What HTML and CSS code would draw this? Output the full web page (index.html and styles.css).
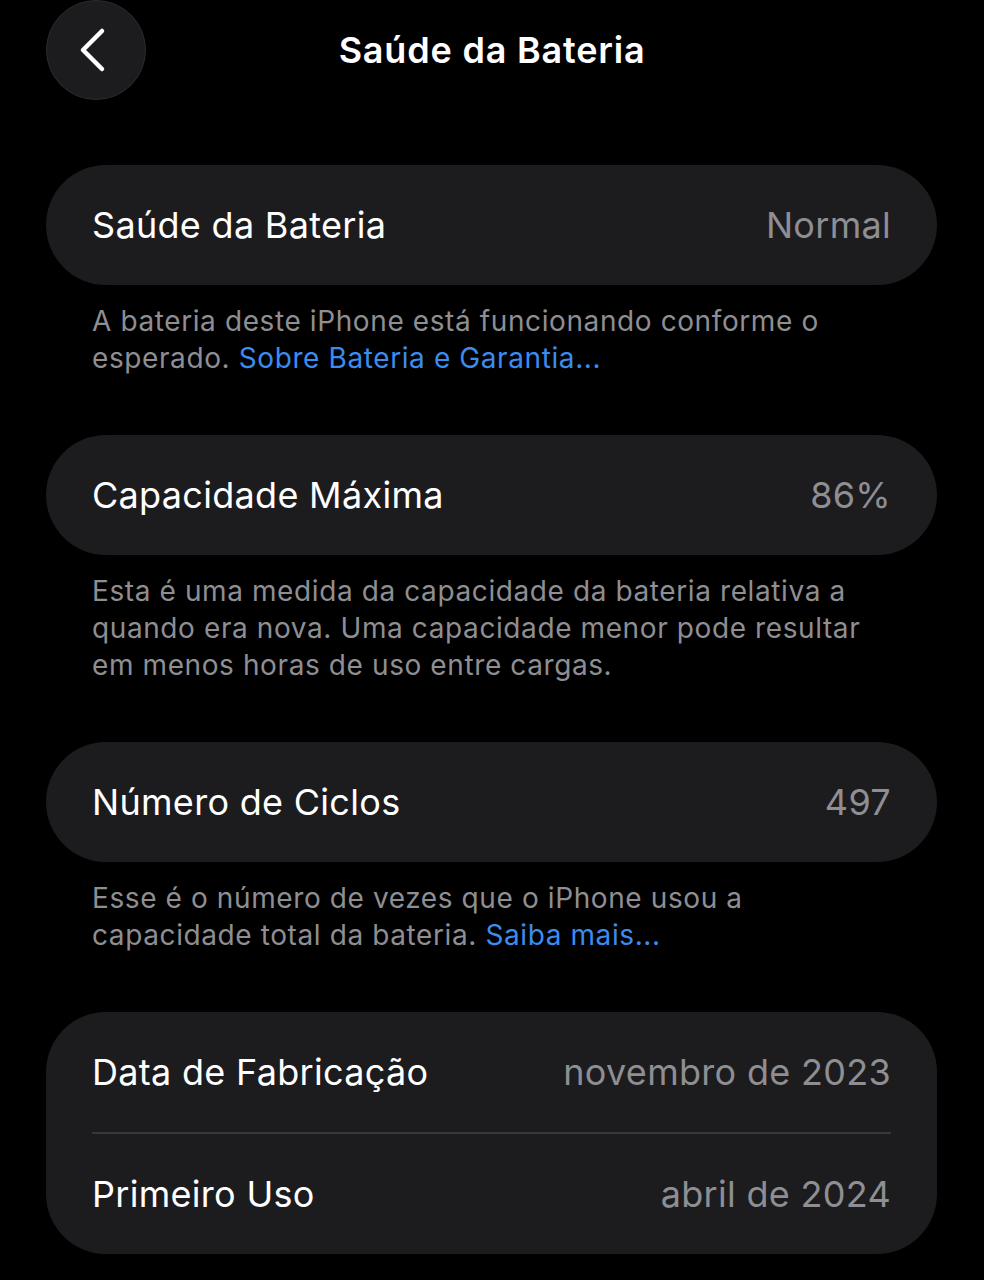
FILE: index.html
```html
<!DOCTYPE html>
<html lang="pt-BR">

<head>
  <meta charset="UTF-8">
  <meta name="viewport" content="width=device-width, initial-scale=1.0">
  <title>Saúde da Bateria</title>
  <link rel="stylesheet" href="styles.css">
</head>

<body>
  <header class="topbar">
    <button class="back-btn" aria-label="Voltar">
      <svg width="34" height="46" viewBox="0 0 34 46">
        <path d="M27 4 L8 23 L27 42" fill="none" stroke="#fff" stroke-width="4.5" stroke-linecap="round" stroke-linejoin="round" />
      </svg>
    </button>
    <h1 class="title">Saúde da Bateria</h1>
  </header>

  <main class="content">
    <section class="group">
      <div class="card">
        <div class="row">
          <span class="label">Saúde da Bateria</span>
          <span class="value">Normal</span>
        </div>
      </div>
      <p class="note">A bateria deste iPhone está funcionando conforme o esperado. <a href="#">Sobre Bateria e Garantia...</a></p>
    </section>

    <section class="group">
      <div class="card">
        <div class="row">
          <span class="label">Capacidade Máxima</span>
          <span class="value">86%</span>
        </div>
      </div>
      <p class="note">Esta é uma medida da capacidade da bateria relativa a quando era nova. Uma capacidade menor pode resultar em menos horas de uso entre cargas.</p>
    </section>

    <section class="group">
      <div class="card">
        <div class="row">
          <span class="label">Número de Ciclos</span>
          <span class="value">497</span>
        </div>
      </div>
      <p class="note">Esse é o número de vezes que o iPhone usou a capacidade total da bateria. <a href="#">Saiba mais...</a></p>
    </section>

    <section class="group">
      <div class="card">
        <div class="row">
          <span class="label">Data de Fabricação</span>
          <span class="value">novembro de 2023</span>
        </div>
        <div class="divider"></div>
        <div class="row">
          <span class="label">Primeiro Uso</span>
          <span class="value">abril de 2024</span>
        </div>
      </div>
    </section>
  </main>
</body>

</html>
```

FILE: styles.css
```css
* {
  margin: 0;
  padding: 0;
  box-sizing: border-box;
  font-family: Inter, 'Noto Sans', sans-serif;
}

body {
  background: #000;
  color: #fff;
  width: 984px;
  height: 1280px;
  overflow: hidden;
}

.topbar {
  position: relative;
  height: 100px;
  display: flex;
  align-items: center;
  justify-content: center;
}

.back-btn {
  position: absolute;
  left: 46px;
  top: 0;
  width: 100px;
  height: 100px;
  border-radius: 50%;
  background: #1c1c1e;
  border: 1.5px solid #2c2c2e;
  display: flex;
  align-items: center;
  justify-content: center;
  padding-right: 8px;
}

.title {
  font-size: 36px;
  font-weight: 600;
  letter-spacing: 0.8px;
}

.content {
  padding: 65px 47px 0 46px;
}

.group {
  margin-bottom: 58px;
}

.card {
  background: #1c1c1e;
  border-radius: 60px;
  padding: 0 46px;
}

.row {
  height: 120px;
  display: flex;
  align-items: center;
  justify-content: space-between;
  font-size: 36px;
  letter-spacing: 0.3px;
}

.value {
  color: #8e8e93;
}

.divider {
  height: 2px;
  background: #38383a;
}

.note {
  padding: 18px 46px 0;
  font-size: 28px;
  line-height: 37px;
  color: #8e8e93;
  letter-spacing: 0.6px;
}

.note a {
  color: #3b8cf0;
  text-decoration: none;
}
```
